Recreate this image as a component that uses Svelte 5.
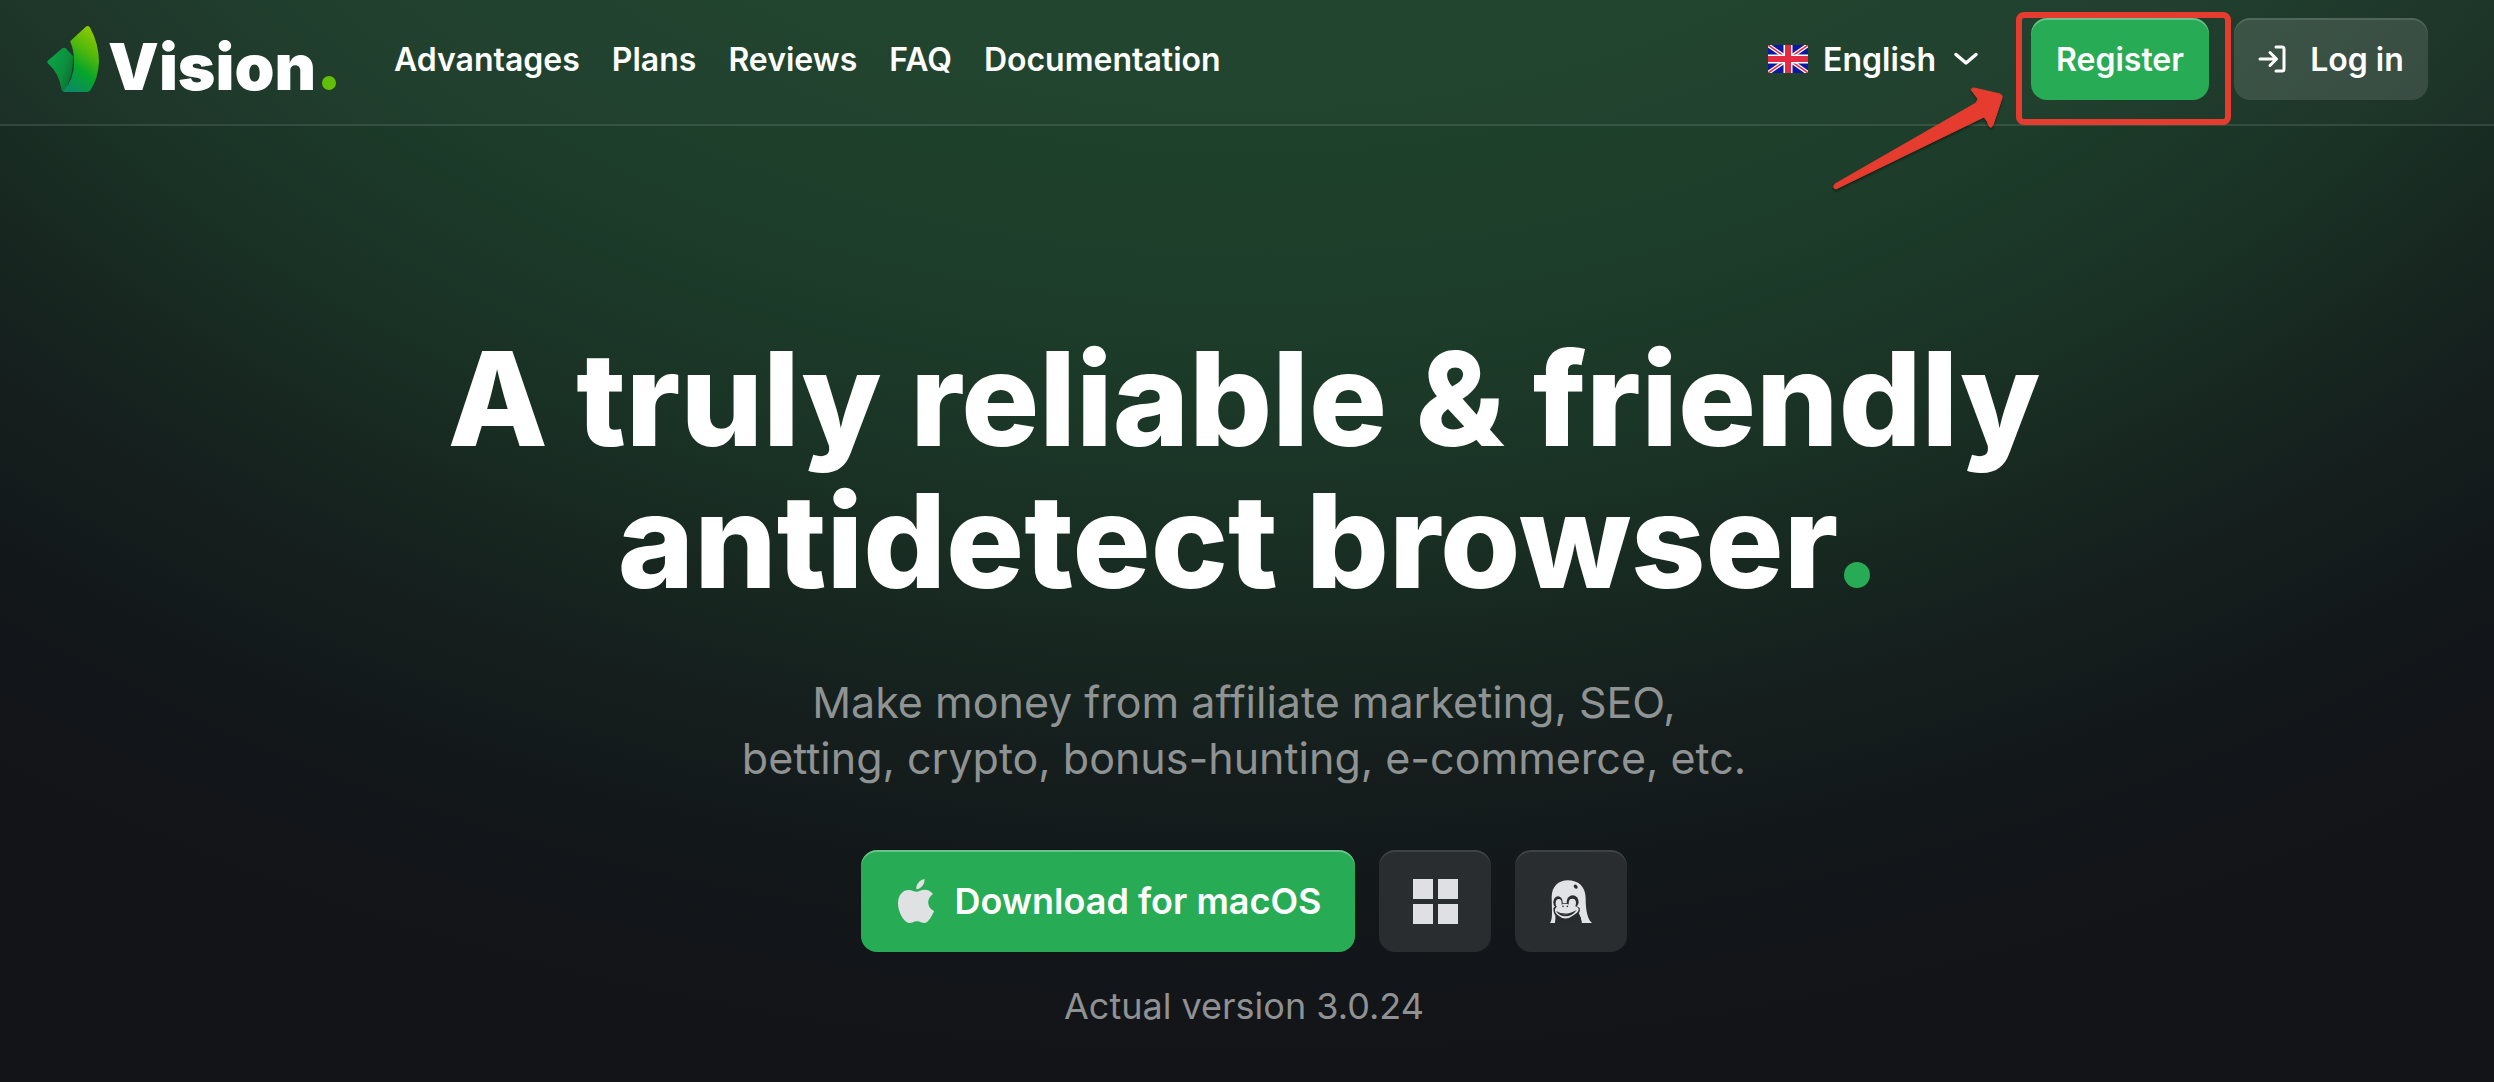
<script>
  const links = ['Advantages', 'Plans', 'Reviews', 'FAQ', 'Documentation'];
</script>

<div class="page">
  <header>
    <a class="logo" href="#home" aria-label="Vision home">
      <svg class="mark" viewBox="0 0 52 66" aria-hidden="true">
        <defs>
          <linearGradient id="leaf" x1="0.7" y1="0" x2="0.3" y2="1">
            <stop offset="0" stop-color="#8fc900" />
            <stop offset="0.35" stop-color="#4fb80c" />
            <stop offset="0.65" stop-color="#06a52a" />
            <stop offset="1" stop-color="#0b8a63" />
          </linearGradient>
          <linearGradient id="bud" x1="0" y1="0.2" x2="1" y2="0.8">
            <stop offset="0" stop-color="#0aa648" />
            <stop offset="0.6" stop-color="#0b8f3c" />
            <stop offset="1" stop-color="#0b6a2f" />
          </linearGradient>
        </defs>
        <path fill="url(#bud)" d="M15 22.500Q17 21 19 22.500L26 30Q27 50 17 65Q15 66 14.500 63Q12 47 1 37.500Q-.5 36 1 34.500Z" />
        <path fill="url(#leaf)" d="M38.500 1Q41 -1 43 1.500Q52 18 52 36Q51 53 43.500 64Q42 66 40 66H17Q16 66 16.500 64.500Q28 52 27 33Q26.500 23 23.500 16.500Q23 15 24.500 14Z" />
      </svg>
      <span class="word">Vision<i></i></span>
    </a>

    <nav>
      {#each links as link}
        <a href={'#' + link.toLowerCase()}>{link}</a>
      {/each}
    </nav>

    <div class="actions">
      <button class="lang" type="button">
        <svg class="flag" viewBox="0 0 40 28" aria-hidden="true">
          <rect width="40" height="28" fill="#0b1a9e" />
          <path d="M0 0 40 28M40 0 0 28" stroke="#fff" stroke-width="4" />
          <path d="M0 0 40 28M40 0 0 28" stroke="#e52a43" stroke-width="1.500" />
          <path d="M20 0V28M0 14H40" stroke="#fff" stroke-width="9" />
          <path d="M20 0V28M0 14H40" stroke="#e52a43" stroke-width="6" />
        </svg>
        <span>English</span>
        <svg class="chevron" viewBox="0 0 24 14" aria-hidden="true">
          <path d="M2 2.500 12 11 22 2.500" fill="none" stroke="#fff" stroke-width="3.500" stroke-linecap="round" stroke-linejoin="round" />
        </svg>
      </button>

      <div class="register-wrap">
        <a class="btn register" href="#register">Register</a>
        <div class="callout"></div>
        <svg class="arrow" viewBox="0 0 180 110" aria-hidden="true">
          <path d="M173 16Q174 13 171 12L145 6Q141 6 143 9L149 17L147 21L6 102Q3 106 7 107L155 35L158 39L160 44Q162 47 164 43Z" fill="#e63c2f" stroke="#e63c2f" stroke-linejoin="round" />
        </svg>
      </div>

      <a class="btn login" href="#login">
        <svg viewBox="0 0 28 28" aria-hidden="true">
          <g fill="none" stroke="#fff" stroke-width="3" stroke-linecap="round" stroke-linejoin="round">
            <path d="M18 2H24Q26 2 26 4V24Q26 26 24 26H18" />
            <path d="M2 14H18M12 7.500 18.500 14 12 20.500" />
          </g>
        </svg>
        <span>Log in</span>
      </a>
    </div>
  </header>

  <main>
    <h1>A truly reliable &amp; friendly<br />antidetect browser<b></b></h1>
    <p class="lead">Make money from affiliate marketing, SEO,<br />betting, crypto, bonus-hunting, e-commerce, etc.</p>

    <div class="downloads">
      <button class="dl mac" type="button">
        <svg viewBox="0 0 36 44" aria-hidden="true">
          <path fill="#dfe1e2" d="M26.500 0C27 4.500 23.500 10 18.300 10.200C17.800 5.500 21.800.8 26.500 0ZM18.800 12.800C20.500 12.800 23 10.800 26.800 10.800C29.800 10.800 33 12.300 35 15C28 19.500 29 29 36 32C34.500 36 30.500 44 26.300 44C23.500 44 22.500 42.200 19 42.200C15.500 42.200 14.200 44 11.700 44C6 44 0 32.500 0 24.500C0 15.500 5.300 11 10.500 11C14 11 16.500 12.800 18.800 12.800Z" />
        </svg>
        <span>Download for macOS</span>
      </button>
      <button class="dl square" type="button" aria-label="Download for Windows">
        <svg class="win" viewBox="0 0 45 45" aria-hidden="true">
          <path fill="#dfe0e3" d="M0 0H20V20H0ZM25 0H45V20H25ZM0 25H20V45H0ZM25 25H45V45H25Z" />
        </svg>
      </button>
      <button class="dl square" type="button" aria-label="Download for Linux">
        <svg class="tux" viewBox="0 0 126 129" aria-hidden="true">
          <path fill="#e2e3e6" d="M0 129C8 118 6 100 5 52C5 20 25 1 53 1C85 1 107 20 107 55C107 90 112 118 126 129H95C94 118 90 108 84 100L17 108C17 118 17 124 15 129Z" />
          <path fill="#282c2e" d="M17 104L24 112Q46 126 72 112L86 98Q94 112 95 129H15Q18 118 17 104Z" />
          <ellipse cx="77" cy="20" rx="5" ry="7" fill="#282c2e" transform="rotate(-40 77 20)" />
          <g fill="#282c2e">
            <ellipse cx="24" cy="67" rx="14" ry="18" />
            <ellipse cx="68" cy="65" rx="18" ry="19" />
            <path d="M10 84Q46 54 89 84Q93 100 72 112Q46 128 24 114Q9 104 10 84Z" />
          </g>
          <g fill="#e2e3e6">
            <ellipse cx="26" cy="70" rx="9" ry="13" />
            <ellipse cx="67" cy="69" rx="11" ry="13" />
            <path d="M15 88Q17 80 32 75Q46 67 60 75Q85 78 86 88Q86 98 68 107Q46 124 27 108Q13 100 15 88Z" />
          </g>
          <path d="M18 93Q46 110 80 90Q67 109 46 109Q28 109 18 93Z" fill="#282c2e" />
          <path d="M28 101Q46 108 66 99Q46 107 28 101Z" fill="#e2e3e6" />
          <g fill="#282c2e"><circle cx="39" cy="79" r="2.500" /><circle cx="52" cy="79" r="2.500" /></g>
        </svg>
      </button>
    </div>

    <p class="version">Actual version 3.0.24</p>
  </main>
</div>

<style>
  :global(body) {
    margin: 0;
    background: #131418;
  }

  .page {
    box-sizing: border-box;
    min-height: 100vh;
    background: radial-gradient(ellipse 2200px 1660px at 50% -600px, #1e422b 40%, #1d3e2a 54%, #1a3326 66%, #172720 75%, #151e1d 82%, #12171a 91%, #131418 100%) #131418;
    color: #fff;
    font-family: Inter, "Noto Sans", sans-serif;
  }

  a {
    color: inherit;
    text-decoration: none;
  }

  button {
    padding: 0;
    border: 0;
    background: none;
    color: inherit;
    font: inherit;
    cursor: pointer;
  }

  svg {
    display: block;
    flex: none;
  }

  header {
    box-sizing: border-box;
    display: flex;
    align-items: center;
    height: 126px;
    padding: 0 66px 6px 47px;
    border-bottom: 2px solid rgba(255, 255, 255, 0.1);
    background: rgba(255, 255, 255, 0.02);
    font-size: 32px;
    font-weight: 600;
    white-space: nowrap;
  }

  .logo {
    display: flex;
    align-items: center;
    width: 347px;
  }

  .mark {
    width: 52px;
    height: 66px;
    margin-right: 9px;
  }

  .word {
    display: flex;
    align-items: baseline;
    padding-top: 16px;
    font-size: 64px;
    font-weight: 900;
    line-height: 64px;
  }

  .word i {
    width: 14px;
    height: 14px;
    margin-left: 6px;
    border-radius: 50%;
    background: #61bf08;
  }

  nav {
    display: flex;
    gap: 32px;
  }

  .actions {
    display: flex;
    align-items: center;
    margin-left: auto;
  }

  .lang {
    display: flex;
    align-items: center;
    margin-right: 52px;
  }

  .flag {
    width: 40px;
    height: 28px;
    margin-right: 15px;
  }

  .chevron {
    width: 26px;
    height: 14px;
    margin-left: 17px;
  }

  .register-wrap {
    position: relative;
    margin-right: 25px;
  }

  .btn {
    box-sizing: border-box;
    display: flex;
    align-items: center;
    justify-content: center;
    height: 82px;
    border-radius: 16px;
  }

  .register {
    width: 178px;
    background: #28ab55;
    box-shadow: inset 0 2px 0 rgba(255, 255, 255, 0.3);
  }

  .login {
    width: 194px;
    gap: 24px;
    background: rgba(255, 255, 255, 0.12);
    box-shadow: inset 0 2px 0 rgba(255, 255, 255, 0.12);
  }

  .login svg {
    width: 28px;
    height: 28px;
  }

  .callout {
    position: absolute;
    inset: -6px -22px -25px -15px;
    border: 6px solid #e63c2f;
    border-radius: 8px;
    pointer-events: none;
  }

  .arrow {
    position: absolute;
    top: 64px;
    right: 200px;
    width: 180px;
    height: 110px;
    filter: drop-shadow(0 2px 1px rgba(0, 0, 0, 0.4));
    pointer-events: none;
  }

  main {
    display: flex;
    flex-direction: column;
    align-items: center;
    padding: 202px 6px 48px 0;
    text-align: center;
  }

  h1 {
    margin: 0;
    font-size: 130px;
    font-weight: 800;
    line-height: 142px;
  }

  h1 b {
    display: inline-block;
    width: 26px;
    height: 26px;
    margin-left: 6px;
    border-radius: 50%;
    background: #28ab55;
  }

  .lead {
    margin: 62px 0 0;
    color: #8f9393;
    font-size: 43px;
    line-height: 56px;
  }

  .downloads {
    display: flex;
    gap: 24px;
    margin-top: 64px;
  }

  .dl {
    display: flex;
    align-items: center;
    justify-content: center;
    height: 102px;
    border-radius: 16px;
  }

  .mac {
    box-sizing: border-box;
    gap: 20px;
    width: 494px;
    padding-left: 4px;
    background: #28ab55;
    box-shadow: inset 0 2px 0 rgba(255, 255, 255, 0.3);
    font-size: 36px;
    font-weight: 600;
  }

  .mac svg {
    width: 36px;
    height: 44px;
  }

  .square {
    width: 112px;
    background: #292d2f;
    box-shadow: inset 0 2px 0 rgba(255, 255, 255, 0.1);
  }

  .win {
    width: 45px;
    height: 45px;
  }

  .tux {
    width: 42px;
    height: 43px;
  }

  .version {
    margin: 32px 0 0;
    color: #8f9193;
    font-size: 36px;
    line-height: 44px;
  }
</style>
